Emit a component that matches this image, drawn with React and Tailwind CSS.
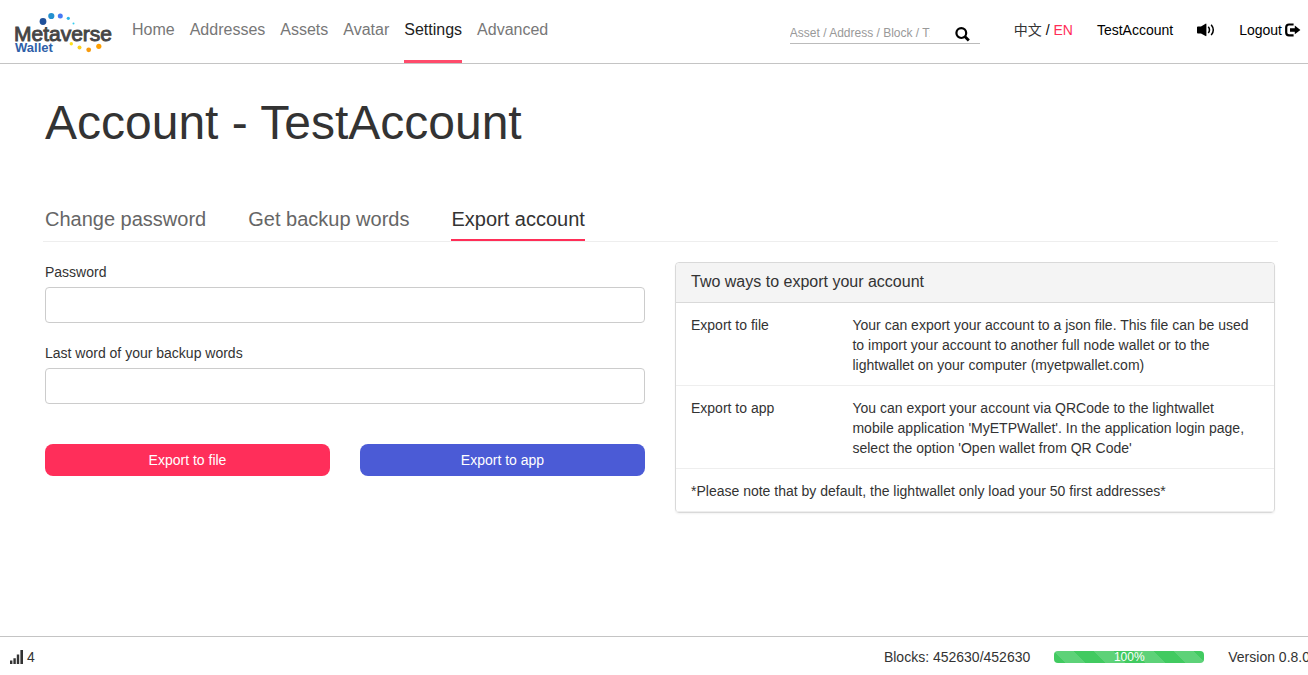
import React from "react";

const NAV = ["Home", "Addresses", "Assets", "Avatar", "Settings", "Advanced"];
const TABS = ["Change password", "Get backup words", "Export account"];

function Logo() {
  return (
    <svg width="100" height="46" viewBox="0 0 100 46" role="img" aria-label="Metaverse Wallet">
      <text x="0" y="32" fontFamily="'Liberation Sans', Arial, sans-serif" fontSize="21" fill="#454545" stroke="#454545" strokeWidth="0.9">Metaverse</text>
      <text x="1" y="43" fontFamily="'Liberation Sans', Arial, sans-serif" fontWeight="700" fontSize="13" fill="#2f5fa8">Wallet</text>
      <circle cx="29" cy="12.5" r="3.4" fill="#20519b" />
      <circle cx="37.3" cy="7" r="3.1" fill="#2390cf" />
      <circle cx="46.3" cy="7" r="2.5" fill="#4779f5" />
      <circle cx="54.3" cy="9.3" r="1.6" fill="#2cb7e8" />
      <circle cx="59.5" cy="14.6" r="1" fill="#35cdf0" />
      <circle cx="57.3" cy="34.7" r="1.7" fill="#ffe11a" />
      <circle cx="65.5" cy="38.5" r="2" fill="#fbd11c" />
      <circle cx="74.7" cy="40.8" r="2.4" fill="#f79b0d" />
      <circle cx="84.8" cy="37.3" r="2.6" fill="#ff9f00" />
    </svg>
  );
}

function SearchIcon() {
  return (
    <svg width="15" height="15" viewBox="0 0 15 15" fill="none" stroke="#000" aria-hidden="true">
      <circle cx="6.3" cy="6.1" r="4.9" strokeWidth="2.2" />
      <path d="M9.8 9.6L13.8 13.6" strokeWidth="2.8" />
    </svg>
  );
}

function VolumeIcon() {
  return (
    <svg width="18" height="14" viewBox="0 0 18 14" aria-hidden="true">
      <path d="M0 4.3Q0 3.4 .9 3.4H4L8.6 .7Q9.4 .3 9.4 1.2V12.6Q9.4 13.5 8.6 13.1L4 10.4H.9Q0 10.4 0 9.5Z" fill="#000" />
      <path d="M11.3 3.8Q13.7 6.9 11.3 10M14.2 1.7Q18.4 6.9 14.2 12.1" fill="none" stroke="#000" strokeWidth="1.5" />
    </svg>
  );
}

function LogoutIcon() {
  return (
    <svg width="16" height="14" viewBox="0 0 16 14" aria-hidden="true">
      <path d="M8.6 1.5H4Q1.2 1.5 1.2 4.3V9.5Q1.2 12.3 4 12.3H8.6" fill="none" stroke="#000" strokeWidth="2.2" />
      <path d="M5 5.2H9.8V2.5L15.4 6.9L9.8 11.3V8.7H5Z" fill="#000" />
    </svg>
  );
}

function SignalIcon() {
  return (
    <svg width="14" height="14" viewBox="0 0 14 14" fill="#333" aria-hidden="true">
      <path d="M0 10.5h2.4V14H0zM3.4 8.2h2.4V14H3.4zM6.8 4.4h2.4V14H6.8zM10.4 0h2.6v14h-2.6z" />
    </svg>
  );
}

function Field({ id, label }) {
  return (
    <div className="flex flex-col gap-[5px]">
      <label htmlFor={id}>{label}</label>
      <input id={id} type="password" className="h-9 w-full rounded border border-[#ccc] bg-white px-3 outline-none" />
    </div>
  );
}

export default function App() {
  return (
    <div className="flex min-h-screen flex-col overflow-x-hidden bg-white font-['Liberation_Sans',Arial,sans-serif] text-sm leading-5 text-[#333]">
      <header className="flex h-16 items-stretch border-b border-[#c4c4c4] pr-[7px] pl-3.5">
        <a href="#home" className="pt-[9px]"><Logo /></a>
        <nav className="ml-[18px] flex gap-[15px] text-base text-[#777]">
          {NAV.map((item) => (
            <a
              key={item}
              href={"#" + item.toLowerCase()}
              className={"border-b-3 pt-5 leading-5 " + (item === "Settings" ? "border-[#ff4b6b] text-[#222]" : "border-transparent")}
            >
              {item}
            </a>
          ))}
        </nav>
        <div className="ml-auto flex items-start gap-6 text-black">
          <form className="mt-5 mr-2.5 flex h-6 w-[190px] items-center border-b border-[#bbb]" onSubmit={(e) => e.preventDefault()}>
            <input
              type="text"
              aria-label="Search"
              placeholder="Asset / Address / Block / Tx"
              className="w-[140px] pt-0.5 text-xs outline-none placeholder:text-[#999]"
            />
            <button type="submit" aria-label="Search" className="ml-[25px] pt-[5px]"><SearchIcon /></button>
          </form>
          <div className="pt-5 font-['Liberation_Sans','Noto_Sans_CJK_SC',sans-serif]">
            <a href="#zh" className="text-[#333]">中文</a> / <a href="#en" className="text-[#ff2e57]">EN</a>
          </div>
          <a href="#account" className="pt-5">TestAccount</a>
          <button type="button" aria-label="Sound" className="pt-[23px]"><VolumeIcon /></button>
          <a href="#logout" className="flex items-center gap-[3px] pt-5">Logout <LogoutIcon /></a>
        </div>
      </header>

      <main className="flex-1 pr-[33px] pl-[45px]">
        <h1 className="pt-8 text-5xl leading-[54px]">Account - TestAccount</h1>
        <div className="-mr-[3px] -ml-0.5 mt-14 flex gap-[42px] border-b border-[#eee] pl-0.5 text-xl text-[#666]">
          {TABS.map((tab) => (
            <a
              key={tab}
              href={"#" + tab.toLowerCase().replaceAll(" ", "-")}
              className={"border-b-2 pb-[7px] leading-[26px] " + (tab === "Export account" ? "border-[#ff2e57] text-[#333]" : "border-transparent")}
            >
              {tab}
            </a>
          ))}
        </div>

        <div className="mt-5 grid grid-cols-2 items-start gap-[30px]">
          <form className="flex flex-col gap-5" onSubmit={(e) => e.preventDefault()}>
            <Field id="password" label="Password" />
            <Field id="lastword" label="Last word of your backup words" />
            <div className="mt-5 grid grid-cols-2 gap-[30px] text-white">
              <button type="submit" className="h-8 rounded-lg bg-[#ff2e5a]">Export to file</button>
              <button type="button" className="h-8 rounded-lg bg-[#4b5bd6]">Export to app</button>
            </div>
          </form>

          <section className="rounded border border-[#d9d9d9] shadow-xs">
            <h2 className="rounded-t border-b border-[#d9d9d9] bg-[#f4f4f4] px-[15px] pt-[9px] pb-2.5 text-base leading-5">
              Two ways to export your account
            </h2>
            <table className="w-full table-fixed text-left">
              <tbody>
                <tr className="border-b border-[#eee]">
                  <th scope="row" className="w-[27%] pt-3 pb-2.5 pl-[15px] align-top font-normal">Export to file</th>
                  <td className="pt-3 pr-6 pb-2.5 pl-[15px]">
                    Your can export your account to a json file. This file can be used to import your account to another full node wallet or to the lightwallet on your computer (myetpwallet.com)
                  </td>
                </tr>
                <tr className="border-b border-[#eee]">
                  <th scope="row" className="pt-3 pb-2.5 pl-[15px] align-top font-normal">Export to app</th>
                  <td className="pt-3 pr-6 pb-2.5 pl-[15px]">
                    You can export your account via QRCode to the lightwallet mobile application 'MyETPWallet'. In the application login page, select the option 'Open wallet from QR Code'
                  </td>
                </tr>
                <tr className="border-b border-[#eee]">
                  <td colSpan={2} className="px-[15px] pt-3 pb-2.5">
                    *Please note that by default, the lightwallet only load your 50 first addresses*
                  </td>
                </tr>
              </tbody>
            </table>
          </section>
        </div>
      </main>

      <footer className="flex h-[39px] items-center overflow-hidden border-t border-[#c4c4c4] pt-0.5 pl-2.5">
        <div className="flex items-center gap-[3px]"><SignalIcon /> 4</div>
        <div className="-mr-1.5 ml-auto flex items-center gap-6 whitespace-nowrap">
          <span>Blocks: 452630/452630</span>
          <div
            role="progressbar"
            aria-label="Sync progress"
            aria-valuenow={100}
            className="h-3 w-[150px] overflow-hidden rounded bg-[#41ca60] bg-[linear-gradient(45deg,rgba(255,255,255,0.15)_25%,transparent_25%,transparent_50%,rgba(255,255,255,0.15)_50%,rgba(255,255,255,0.15)_75%,transparent_75%,transparent)] bg-size-[40px_40px] text-center text-xs leading-3 text-white"
          >
            100%
          </div>
          <span className="pr-1">Version 0.8.0</span>
        </div>
      </footer>
    </div>
  );
}
